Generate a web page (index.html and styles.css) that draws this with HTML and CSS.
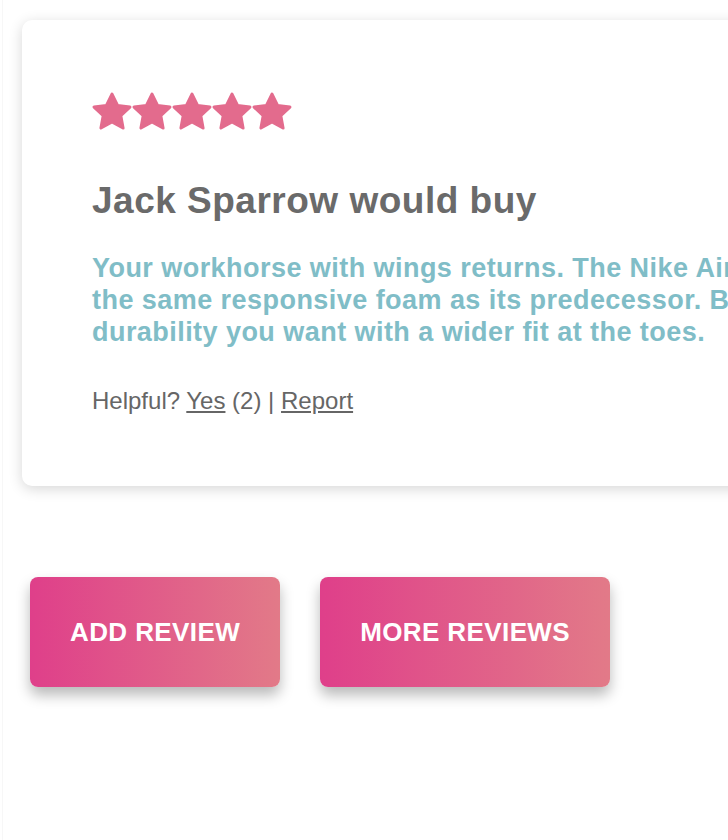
FILE: index.html
```html
<!DOCTYPE html>
<html lang="en">
<head>
<meta charset="utf-8">
<title>Review</title>
<link rel="stylesheet" href="styles.css">
</head>
<body>
<div class="page">
  <div class="card">
    <div class="stars">
      <svg class="star" viewBox="1.5 1.5 21 21"><path d="M12 2.6l2.9 6 6.5.8-4.8 4.5 1.2 6.5L12 17.2l-5.8 3.2 1.2-6.5-4.8-4.5 6.5-.8z"/></svg>
      <svg class="star" viewBox="1.5 1.5 21 21"><path d="M12 2.6l2.9 6 6.5.8-4.8 4.5 1.2 6.5L12 17.2l-5.8 3.2 1.2-6.5-4.8-4.5 6.5-.8z"/></svg>
      <svg class="star" viewBox="1.5 1.5 21 21"><path d="M12 2.6l2.9 6 6.5.8-4.8 4.5 1.2 6.5L12 17.2l-5.8 3.2 1.2-6.5-4.8-4.5 6.5-.8z"/></svg>
      <svg class="star" viewBox="1.5 1.5 21 21"><path d="M12 2.6l2.9 6 6.5.8-4.8 4.5 1.2 6.5L12 17.2l-5.8 3.2 1.2-6.5-4.8-4.5 6.5-.8z"/></svg>
      <svg class="star" viewBox="1.5 1.5 21 21"><path d="M12 2.6l2.9 6 6.5.8-4.8 4.5 1.2 6.5L12 17.2l-5.8 3.2 1.2-6.5-4.8-4.5 6.5-.8z"/></svg>
    </div>
    <h2 class="title">Jack Sparrow would buy</h2>
    <p class="body">Your workhorse with wings returns. The Nike Air Zoom Pegasus 37 continues to put a spring in your step, using<br>the same responsive foam as its predecessor. Breathable mesh in the upper combines the comfort and<br>durability you want with a wider fit at the toes.</p>
    <p class="helpful">Helpful? <a href="#">Yes</a> (2) | <a href="#">Report</a></p>
  </div>
  <div class="actions">
    <button class="btn">ADD REVIEW</button>
    <button class="btn">MORE REVIEWS</button>
  </div>
</div>
</body>
</html>
```
FILE: styles.css
```css
html, body {
  margin: 0;
  padding: 0;
  background: #fff;
  overflow: hidden;
}
body {
  font-family: "Liberation Sans", Arial, sans-serif;
  width: 728px;
  height: 840px;
}
.page {
  width: 1600px;
  margin-left: 2px;
  padding: 20px 0 0 19px;
  border-left: 1px solid #f7f7f7;
  min-height: 840px;
  box-sizing: border-box;
}
.card {
  width: 1500px;
  height: 466px;
  box-sizing: border-box;
  background: #fff;
  border-radius: 10px;
  box-shadow: 0 3px 14px rgba(0,0,0,0.16);
  padding: 72px 70px 0 70px;
}
.stars {
  display: flex;
  height: 40px;
}
.star {
  width: 40px;
  height: 40px;
  fill: #e36b8d;
  stroke: #e36b8d;
  stroke-width: 1.6;
  stroke-linejoin: round;
}
.title {
  margin: 47px 0 0 0;
  font-size: 37px;
  line-height: 44px;
  letter-spacing: 0.5px;
  font-weight: bold;
  color: #6a6a6a;
}
.body {
  margin: 29px 0 0 0;
  font-size: 27px;
  line-height: 32px;
  letter-spacing: 0.45px;
  font-weight: bold;
  color: #80bdc7;
  white-space: nowrap;
}
.helpful {
  margin: 39px 0 0 0;
  font-size: 24px;
  line-height: 28px;
  color: #666;
}
.helpful a {
  color: #666;
  text-decoration: underline;
}
.actions {
  display: flex;
  gap: 40px;
  margin: 91px 0 0 8px;
}
.btn {
  height: 110px;
  padding: 0 40px;
  border: none;
  border-radius: 8px;
  background: linear-gradient(to right, #df3f8a, #e27a88);
  color: #fff;
  font-family: "Liberation Sans", Arial, sans-serif;
  font-weight: bold;
  font-size: 26px;
  letter-spacing: 0.4px;
  box-shadow: 0 8px 14px rgba(0,0,0,0.28);
}
```
